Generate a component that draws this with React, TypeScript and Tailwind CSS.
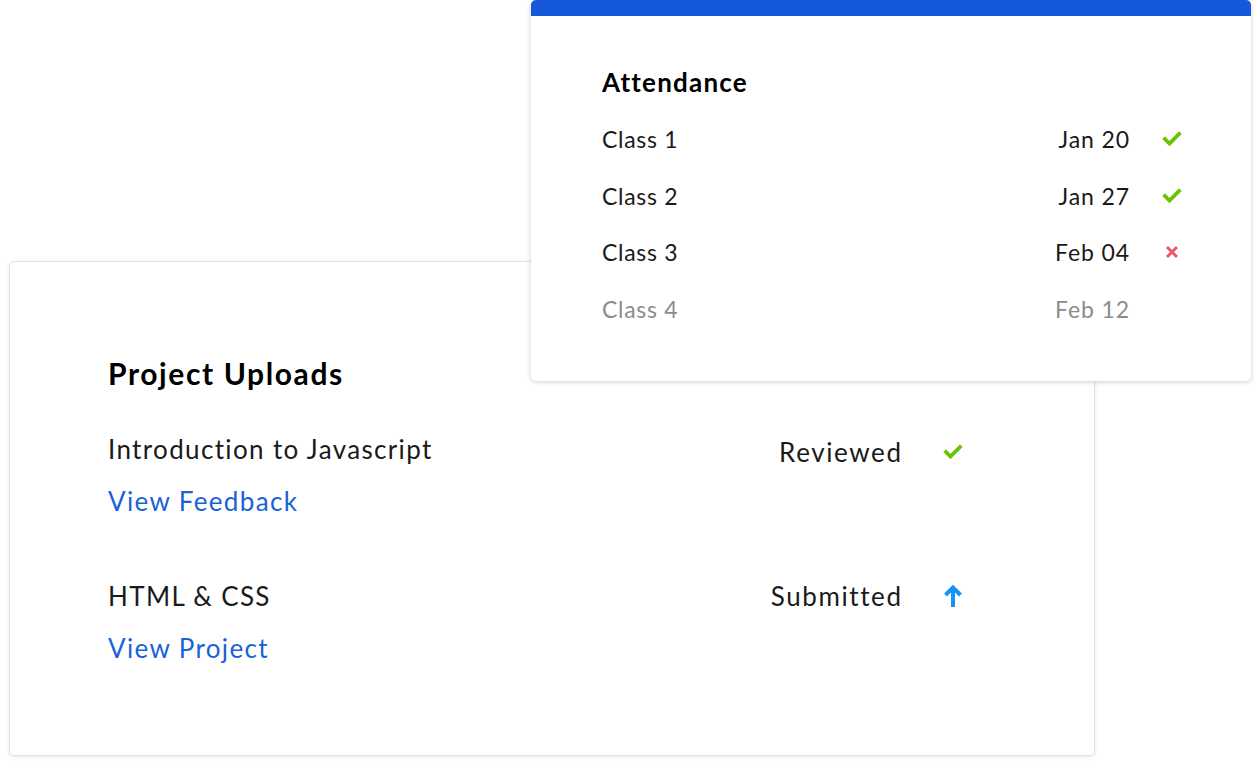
import React from 'react';

type Mark = 'check' | 'cross' | 'up' | null;

const Check: React.FC = () => (
    <svg width="20" height="16" viewBox="0 0 20 16" className="block">
        <path d="M3 8 L7.5 12.5 L17 3" fill="none" stroke="#6ac500" strokeWidth="3.8" strokeLinecap="square" />
    </svg>
);

const Cross: React.FC = () => (
    <svg width="16" height="16" viewBox="0 0 16 16" className="block">
        <path d="M3 3 L13 13 M13 3 L3 13" fill="none" stroke="#f25767" strokeWidth="3" />
    </svg>
);

const ArrowUp: React.FC = () => (
    <svg width="22" height="24" viewBox="0 0 22 24" className="block">
        <path d="M11 23 L11 4 M3.5 11 L11 3.5 L18.5 11" fill="none" stroke="#1592f2" strokeWidth="4" />
    </svg>
);

const MarkIcon: React.FC<{ mark: Mark }> = ({ mark }) => {
    if (mark === 'check') return <Check />;
    if (mark === 'cross') return <Cross />;
    if (mark === 'up') return <ArrowUp />;
    return null;
};

const classes: { name: string; date: string; mark: Mark; muted?: boolean }[] = [
    { name: 'Class 1', date: 'Jan 20', mark: 'check' },
    { name: 'Class 2', date: 'Jan 27', mark: 'check' },
    { name: 'Class 3', date: 'Feb 04', mark: 'cross' },
    { name: 'Class 4', date: 'Feb 12', mark: null, muted: true },
];

const projects: { title: string; link: string; status: string; mark: Mark }[] = [
    { title: 'Introduction to Javascript', link: 'View Feedback', status: 'Reviewed', mark: 'check' },
    { title: 'HTML & CSS', link: 'View Project', status: 'Submitted', mark: 'up' },
];

const App: React.FC = () => {
    return (
        <div className="w-[1258px] h-[770px] bg-white overflow-hidden font-['Lato',_'Liberation_Sans',_sans-serif] text-[#1a1a1a]">
            {/* attendance card */}
            <div className="relative z-10 ml-[531px] w-[720px] h-[381px] bg-white rounded-[5px] shadow-[0_1px_5px_rgba(0,0,0,0.2)] overflow-hidden">
                <div className="h-[16px] bg-[#1558d9]" />
                <div className="pl-[71px] pr-[69px] pt-[50px]">
                    <h2 className="h-[32px] leading-[32px] text-[26px] font-bold tracking-[1.2px] text-black">Attendance</h2>
                    <div className="mt-[13px]">
                        {classes.map((c) => (
                            <div
                                key={c.name}
                                className={`flex items-center h-[56.5px] text-[23px] tracking-[0.7px] ${c.muted ? 'text-[#8c8c8c]' : 'text-[#1a1a1a]'}`}
                            >
                                <span className="flex-1">{c.name}</span>
                                <span className="tracking-[0.9px] -mr-[1px]">{c.date}</span>
                                <span className="ml-[33px] w-[20px] flex justify-center">
                                    <MarkIcon mark={c.mark} />
                                </span>
                            </div>
                        ))}
                    </div>
                </div>
            </div>

            {/* project uploads card */}
            <div className="-mt-[120px] ml-[9px] w-[1086px] h-[495px] bg-white border border-[#e3e3e3] rounded-[5px] shadow-[0_1px_4px_rgba(0,0,0,0.08)] pl-[98px] pr-[130px] pt-[91px]">
                <h2 className="h-[40px] leading-[40px] text-[30px] font-bold tracking-[1.6px] text-black">Project Uploads</h2>
                {projects.map((p, i) => (
                    <div key={p.title} className={`flex items-start ${i === 0 ? 'mt-[30px]' : 'mt-[43px]'}`}>
                        <div className="flex-1 tracking-[1.35px]">
                            <div className="h-[52px] leading-[52px] text-[26px] text-[#1a1a1a]">{p.title}</div>
                            <a href="#" className="block h-[52px] leading-[52px] text-[26px] text-[#1b62d6]">
                                {p.link}
                            </a>
                        </div>
                        <div className={`flex items-center h-[52px] ${i === 0 ? 'mt-[3px]' : 'mt-0'} text-[26px] tracking-[1.6px] text-[#1a1a1a]`}>
                            <span className="-mr-[1.6px]">{p.status}</span>
                            <span className="ml-[41px] w-[22px] flex justify-center">
                                <MarkIcon mark={p.mark} />
                            </span>
                        </div>
                    </div>
                ))}
            </div>
        </div>
    );
};

export default App;
